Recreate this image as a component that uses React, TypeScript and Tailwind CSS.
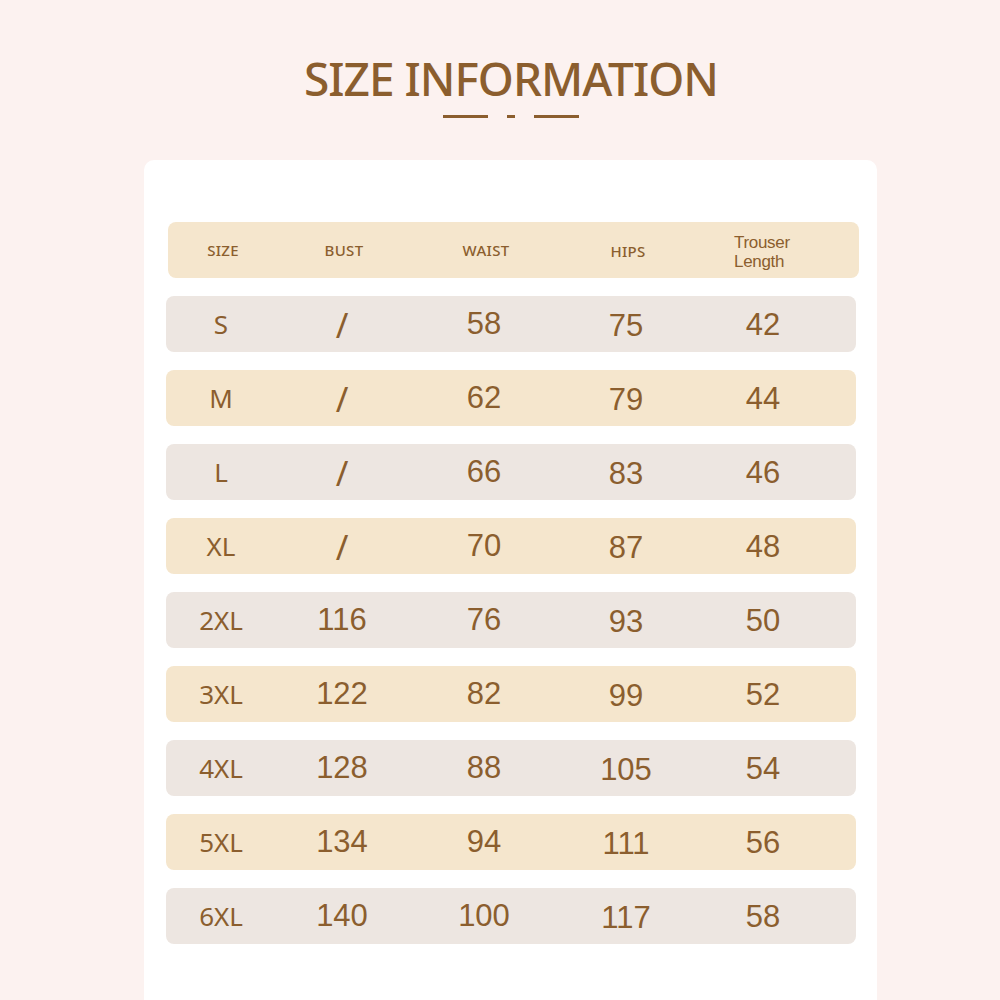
import React from 'react';

const rows = [
  { size: 'S', bust: '/', waist: '58', hips: '75', length: '42' },
  { size: 'M', bust: '/', waist: '62', hips: '79', length: '44' },
  { size: 'L', bust: '/', waist: '66', hips: '83', length: '46' },
  { size: 'XL', bust: '/', waist: '70', hips: '87', length: '48' },
  { size: '2XL', bust: '116', waist: '76', hips: '93', length: '50' },
  { size: '3XL', bust: '122', waist: '82', hips: '99', length: '52' },
  { size: '4XL', bust: '128', waist: '88', hips: '105', length: '54' },
  { size: '5XL', bust: '134', waist: '94', hips: '111', length: '56' },
  { size: '6XL', bust: '140', waist: '100', hips: '117', length: '58' },
];

const grid = 'grid grid-cols-[110px_132px_152px_132px_142px] items-center';

export default function App() {
  return (
    <div className="w-[1000px] h-[1000px] overflow-hidden bg-[#fcf2f0] flex flex-col items-center text-[#8b5e2e] font-['Noto_Sans',sans-serif]">
      {/* Title */}
      <h1 className="mt-[48px] ml-[22px] text-[46px] leading-[60px] font-medium tracking-[-1px]">SIZE INFORMATION</h1>
      <div className="mt-[7px] ml-[22px] flex items-center gap-[19px]">
        <span className="w-[45px] h-[3px] bg-[#8b5e2e]" />
        <span className="w-[8px] h-[3px] bg-[#8b5e2e]" />
        <span className="w-[45px] h-[3px] bg-[#8b5e2e]" />
      </div>

      {/* Card */}
      <div className="mt-[42px] ml-[21px] w-[733px] flex-1 bg-white rounded-t-[10px] pt-[62px] pl-[22px]">
        <div className={`${grid} w-[691px] h-[56px] ml-[2px] rounded-[8px] bg-[#f5e6cd] text-[15px] font-medium tracking-[0.3px]`}>
          <span className="text-center">SIZE</span>
          <span className="text-center">BUST</span>
          <span className="text-center">WAIST</span>
          <span className="text-center pt-[3px]">HIPS</span>
          <span className="text-left pl-[40px] pt-[3px] font-['Liberation_Sans',sans-serif] font-normal tracking-[-0.3px] text-[17px] leading-[19px]">
            Trouser
            <br />
            Length
          </span>
        </div>

        <div className="mt-[18px] flex flex-col gap-[18px]">
          {rows.map((r, i) => (
            <div
              key={r.size}
              className={`${grid} w-[690px] h-[56px] rounded-[8px] ${i % 2 === 0 ? 'bg-[#ede6e1]' : 'bg-[#f5e6cd]'}`}
            >
              <span className="text-center text-[26px] font-normal">{r.size}</span>
              <span className={`text-center ${r.bust === '/' ? 'text-[34px] leading-[34px] pt-[2px]' : "text-[31px] font-['Liberation_Sans',sans-serif]"}`}>{r.bust}</span>
              <span className="text-center text-[31px] font-['Liberation_Sans',sans-serif]">{r.waist}</span>
              <span className="text-center text-[31px] font-['Liberation_Sans',sans-serif] pt-[4px]">{r.hips}</span>
              <span className="text-center text-[31px] font-['Liberation_Sans',sans-serif] pt-[2px]">{r.length}</span>
            </div>
          ))}
        </div>
      </div>
    </div>
  );
}
